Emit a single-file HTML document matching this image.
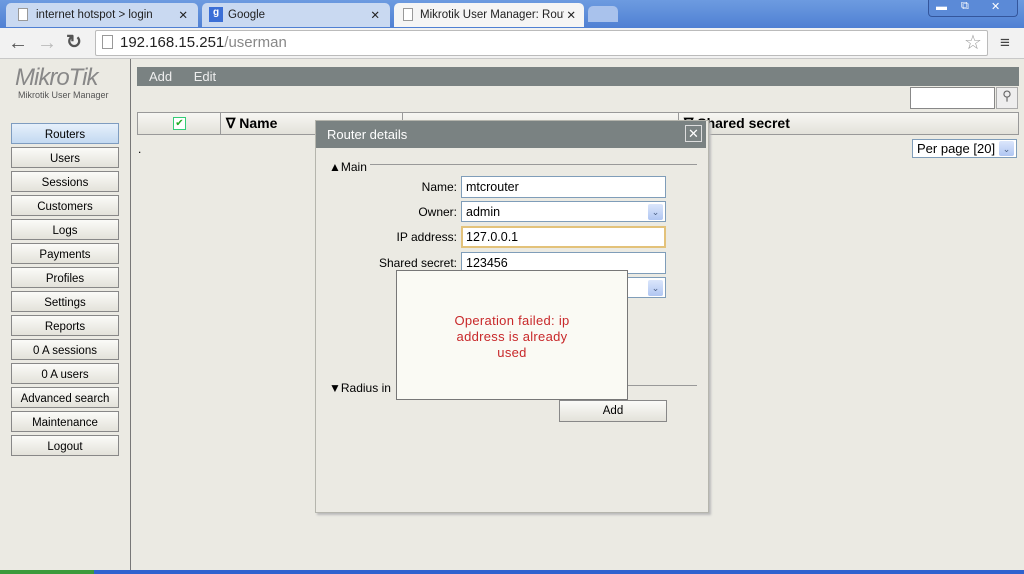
<!DOCTYPE html>
<html><head><meta charset="utf-8"><style>
*{margin:0;padding:0;box-sizing:border-box}
body{width:1024px;height:574px;overflow:hidden;background:#ebeae3;font-family:"Liberation Sans",sans-serif;font-size:12px;color:#000;position:relative}
.a{position:absolute}
.tab{position:absolute;top:3px;height:24px;border-radius:5px 5px 0 0;font-size:11.5px;padding:6px 0 0 30px;color:#222}
.pg{position:absolute;left:12px;top:5px;width:10px;height:13px;border:1px solid #999;background:#fff}
.btn{position:absolute;left:11px;width:108px;height:21px;border:1px solid #888;background:linear-gradient(#fbfbf8,#e3e2da);text-align:center;font-size:11.5px;line-height:20px;padding-top:1px}
.lbl{position:absolute;text-align:right;width:140px;left:317px;font-size:12px}
.inp{position:absolute;left:461px;width:205px;height:22px;border:1px solid #7f9db9;background:#fff;font-size:12.5px;padding:3px 4px}
.dd{position:absolute;right:2px;top:2px;width:15px;height:16px;background:linear-gradient(#dbe6fb,#b0c6f2);border-radius:2px;color:#4d6185;font-size:9px;text-align:center;line-height:16px}
</style></head><body>
<div class="a" style="left:0;top:0;width:1024px;height:28px;background:linear-gradient(#6d9be0,#4f80d3)"></div>
<div class="tab" style="left:6px;width:192px;background:#c9d9f1"><span class="pg"></span>internet hotspot &gt; login<span class="a" style="right:10px;top:5px">✕</span></div>
<div class="tab" style="left:202px;width:188px;background:#c9d9f1;padding-left:26px">Google<span class="a" style="left:7px;top:4px;width:14px;height:15px;background:#3b6fd6;color:#fff;font-size:10px;text-align:center;font-weight:bold">g</span><span class="a" style="right:10px;top:5px">✕</span></div>
<div class="tab" style="left:394px;width:190px;background:#f5f5f5;padding-left:26px"><span class="pg" style="left:9px"></span>Mikrotik User Manager: Rout<span class="a" style="right:8px;top:5px;background:#f5f5f5;padding-left:2px">✕</span></div>
<div class="tab" style="left:588px;width:30px;height:16px;top:6px;background:#a9c2ec"></div>
<div class="a" style="left:928px;top:0;width:90px;height:17px;border:1px solid #34569c;border-top:0;border-radius:0 0 4px 4px;background:#5b8ad7;color:#fff;font-size:11px"><span class="a" style="left:7px;top:1px">▬</span><span class="a" style="left:32px;top:0">⧉</span><span class="a" style="left:62px;top:0">✕</span></div>
<div class="a" style="left:0;top:28px;width:1024px;height:31px;background:#f2f2f2;border-bottom:1px solid #c8c8c8"></div>
<div class="a" style="left:8px;top:32px;font-size:20px;color:#555">←</div>
<div class="a" style="left:37px;top:32px;font-size:20px;color:#bbb">→</div>
<div class="a" style="left:66px;top:31px;font-size:19px;color:#555;font-weight:bold">↻</div>
<div class="a" style="left:95px;top:30px;width:893px;height:26px;background:#fff;border:1px solid #bbb;border-radius:2px"></div>
<div class="a" style="left:102px;top:35px;width:11px;height:14px;border:1px solid #999"></div>
<div class="a" style="left:120px;top:34px;font-size:15px;color:#222">192.168.15.251<span style="color:#888">/userman</span></div>
<div class="a" style="left:964px;top:30px;font-size:20px;color:#999">☆</div>
<div class="a" style="left:1000px;top:33px;font-size:17px;color:#444">≡</div>
<div class="a" style="left:15px;top:64px;font-size:24px;font-style:italic;color:#888;letter-spacing:-1px">MikroTik</div>
<div class="a" style="left:18px;top:90px;font-size:9px;color:#555">Mikrotik User Manager</div>
<div class="a" style="left:130px;top:59px;width:1px;height:511px;background:#777"></div>
<div class="btn" style="top:123px;background:linear-gradient(#e6f0fb,#c3d9f1);border-color:#7e9cc0">Routers</div>
<div class="btn" style="top:147px">Users</div>
<div class="btn" style="top:171px">Sessions</div>
<div class="btn" style="top:195px">Customers</div>
<div class="btn" style="top:219px">Logs</div>
<div class="btn" style="top:243px">Payments</div>
<div class="btn" style="top:267px">Profiles</div>
<div class="btn" style="top:291px">Settings</div>
<div class="btn" style="top:315px">Reports</div>
<div class="btn" style="top:339px">0 A sessions</div>
<div class="btn" style="top:363px">0 A users</div>
<div class="btn" style="top:387px">Advanced search</div>
<div class="btn" style="top:411px">Maintenance</div>
<div class="btn" style="top:435px">Logout</div>
<div class="a" style="left:137px;top:67px;width:882px;height:19px;background:#7a8282;color:#eee;font-size:13px;padding:2px 12px;word-spacing:18px">Add Edit</div>
<div class="a" style="left:910px;top:87px;width:85px;height:22px;background:#fff;border:1px solid #888"></div>
<div class="a" style="left:996px;top:87px;width:22px;height:22px;border:1px solid #aaa;background:#eee;font-size:13px;text-align:center;color:#666">⚲</div>
<div class="a" style="left:137px;top:112px;width:882px;height:23px;background:linear-gradient(#f7f7f3,#e3e2da);border:1px solid #999"></div>
<div class="a" style="left:220px;top:112px;width:1px;height:23px;background:#999"></div>
<div class="a" style="left:402px;top:112px;width:1px;height:23px;background:#999"></div>
<div class="a" style="left:678px;top:112px;width:1px;height:23px;background:#999"></div>
<div class="a" style="left:173px;top:117px;width:13px;height:13px;border:1px solid #3c7;background:#fff;color:#2a2;font-size:10px;line-height:11px;text-align:center">✔</div>
<div class="a" style="left:226px;top:115px;font-size:14px;font-weight:bold">∇ Name</div>
<div class="a" style="left:684px;top:115px;font-size:14px;font-weight:bold">∇ Shared secret</div>
<div class="a" style="left:138px;top:142px">.</div>
<div class="a" style="left:912px;top:139px;width:105px;height:19px;border:1px solid #7f9db9;background:#fff;font-size:13px;padding:1px 4px">Per page [20]<div class="dd" style="top:1px;height:15px">⌄</div></div>
<div class="a" style="left:315px;top:120px;width:394px;height:393px;background:#ebeae3;border:1px solid #b5b5ad;box-shadow:2px 2px 2px #bbb"></div>
<div class="a" style="left:316px;top:121px;width:390px;height:27px;background:#7a8282;color:#fff;font-size:13px;padding:6px 11px">Router details</div>
<div class="a" style="left:685px;top:125px;width:17px;height:17px;border:1px solid #ddd;color:#fff;font-size:13px;text-align:center;line-height:15px">✕</div>
<div class="a" style="left:329px;top:160px;font-size:12px">▲Main</div>
<div class="a" style="left:370px;top:164px;width:327px;height:1px;background:#999"></div>
<div class="lbl" style="top:180px">Name:</div><div class="inp" style="top:176px">mtcrouter</div>
<div class="lbl" style="top:205px">Owner:</div><div class="inp" style="top:201px;height:21px">admin<div class="dd">⌄</div></div>
<div class="lbl" style="top:230px">IP address:</div><div class="inp" style="top:226px;border:2px solid #e3c27a;padding:2px 3px">127.0.0.1</div>
<div class="lbl" style="top:256px">Shared secret:</div><div class="inp" style="top:252px">123456</div>
<div class="inp" style="top:277px;height:21px"><div class="dd">⌄</div></div>
<div class="a" style="left:329px;top:381px;font-size:12px">▼Radius in</div>
<div class="a" style="left:400px;top:385px;width:297px;height:1px;background:#999"></div>
<div class="a" style="left:559px;top:400px;width:108px;height:22px;border:1px solid #888;background:linear-gradient(#fbfbf8,#e3e2da);text-align:center;line-height:20px;font-size:11.5px">Add</div>
<div class="a" style="left:396px;top:270px;width:232px;height:130px;background:#fafaf4;border:1px solid #777;color:#c8282a;font-size:13px;text-align:center;padding-top:42px;line-height:16px;letter-spacing:.3px">Operation failed: ip<br>address is already<br>used</div>
<div class="a" style="left:0;top:570px;width:1024px;height:4px;background:#2f62cf"></div>
<div class="a" style="left:0;top:570px;width:94px;height:4px;background:#3c9a3c"></div>
</body></html>
